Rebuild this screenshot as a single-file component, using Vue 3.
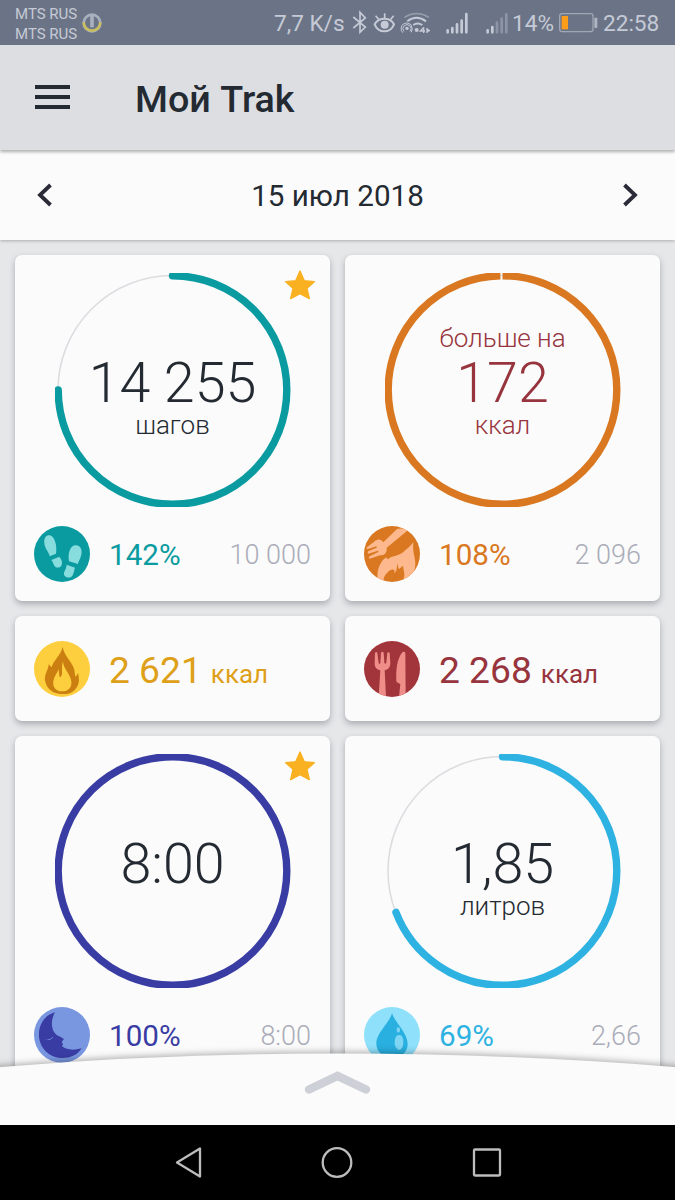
<template>
  <div class="phone">
    <div class="status">
      <div class="operators">
        <span>MTS RUS</span>
        <span>MTS RUS</span>
      </div>
      <svg class="badge" width="20" height="20" viewBox="0 0 60 60">
        <circle cx="30" cy="30" r="25" fill="none" stroke="#a9b0bf" stroke-width="8" />
        <path d="M5 28 A25 25 0 0 0 55 28" fill="none" stroke="#c9bd62" stroke-width="8" />
        <path d="M30 8 V43" stroke="#a9b0bf" stroke-width="11" />
      </svg>
      <span class="speed">7,7 K/s</span>
      <svg class="indicators" width="162" height="30" viewBox="0 0 486 90" fill="none" stroke="#c5cad6">
        <path d="M10 27 L46 57 L30 73 V13 L46 30 L10 60" stroke-width="5" />
        <path d="M74 49 C87 27 119 27 132 49 C121 77 85 77 74 49 Z" stroke-width="6" />
        <circle cx="104" cy="50" r="12" fill="#c5cad6" stroke="none" />
        <path d="M104 31 V16 M87 35 L77 23 M121 35 L131 23" stroke-width="5" />
        <path d="M163 28 Q200 5 237 28" stroke="#959dac" stroke-width="5" />
        <path d="M172 40 Q199 19 228 40" stroke-width="6" />
        <path d="M190 51 Q202 42 217 51" stroke-width="6" />
        <circle cx="171" cy="61" r="5" fill="#c5cad6" stroke="none" />
        <path d="M162 70 A12 12 0 1 1 180 70 M158 74 A18 18 0 0 1 160 48 Q171 40 183 50 Q190 62 184 73" stroke-width="3" />
        <circle cx="200" cy="66" r="6" fill="#c5cad6" stroke="none" />
        <path d="M221 58 L211 69 H225 M221 58 V75 M231 75 V60 M231 62 L239 70 M231 72 L239 66" stroke-width="4" />
        <path d="M293 73 V67 M307 73 V60 M321 73 V49 M335 73 V38 M349 73 V18" stroke-width="8" stroke-linecap="round" />
        <path d="M413 73 V67 M427 73 V57" stroke-width="8" stroke-linecap="round" />
        <path d="M441 73 V44 M455 73 V32 M469 73 V19" stroke="#8d94a5" stroke-width="8" stroke-linecap="round" />
      </svg>
      <span class="charge">14%</span>
      <svg class="battery" width="39" height="20" viewBox="0 0 117 60">
        <rect x="2" y="2" width="100" height="54" rx="7" fill="none" stroke="#9fa6b4" stroke-width="4" />
        <rect x="8" y="9" width="19" height="40" fill="#ff9c18" />
        <rect x="106" y="14" width="9" height="31" rx="2" fill="#aeb4c1" />
      </svg>
      <span class="clock">22:58</span>
    </div>

    <header class="header">
      <div class="burger"><i></i><i></i><i></i></div>
      <h1>Мой Trak</h1>
    </header>

    <div class="datebar">
      <svg width="16" height="24" viewBox="0 0 16 24"><path d="M13.5 2 L3 12 L13.5 22" fill="none" stroke="#2b2b38" stroke-width="3.8" /></svg>
      <span>15 июл 2018</span>
      <svg width="16" height="24" viewBox="0 0 16 24"><path d="M2.5 2 L13 12 L2.5 22" fill="none" stroke="#2b2b38" stroke-width="3.8" /></svg>
    </div>

    <main class="grid">
      <section v-for="card in cards" :key="card.icon" class="card" :class="[card.type, card.icon]">
        <template v-if="card.type === 'goal'">
          <div class="ring">
            <svg width="236" height="234" viewBox="0 0 236 234">
              <circle cx="117.500" cy="117" r="114.5" fill="none" stroke="#dcdde0" stroke-width="1.6" />
              <circle
                cx="117.500" cy="117" r="114.3" fill="none" pathLength="100"
                stroke="currentColor" stroke-width="7.4" :stroke-linecap="card.progress < 99 ? 'round' : 'butt'"
                :stroke-dasharray="card.progress + ' 100'" transform="rotate(-90 117.500 117)"
              />
            </svg>
            <div class="numbers">
              <div class="above">{{ card.above }}</div>
              <div class="value">{{ card.value }}</div>
              <div class="unit">{{ card.unit }}</div>
            </div>
          </div>
          <svg v-if="card.star" class="star" width="32" height="30" viewBox="0 0 96 90">
            <path d="M48 3 L61 32 L91 35 L69 55 L76 86 L48 71 L20 86 L27 55 L5 35 L35 32 Z" fill="#f9b122" stroke="#f9b122" stroke-width="4" stroke-linejoin="round" />
          </svg>
        </template>
        <div class="row">
          <svg class="icon" width="56" height="56" viewBox="0 0 168 168">
            <clipPath :id="'clip-' + card.icon"><circle cx="84" cy="84" r="84" /></clipPath>
            <g :clip-path="`url(#clip-${card.icon})`">
              <rect width="168" height="168" :fill="card.bg" />
              <path v-for="(p, i) in card.paths" :key="i" :d="p[1]" :fill="p[0]" />
            </g>
          </svg>
          <template v-if="card.type === 'goal'">
            <span class="percent">{{ card.percent }}</span>
            <span class="target">{{ card.target }}</span>
          </template>
          <template v-else>
            <span class="amount">{{ card.value }}</span>
            <span class="kcal">{{ card.unit }}</span>
          </template>
        </div>
      </section>
    </main>

    <svg class="drawer" width="675" height="85" viewBox="0 0 675 85">
      <path d="M-5 27.500 Q337.5 -0.500 680 27.500 V95 H-5 Z" fill="#fbfbfb" />
      <path d="M309 49.500 L337.5 36 L366 49.500" fill="none" stroke="#cdd0d7" stroke-width="8.500" stroke-linecap="round" />
    </svg>

    <nav class="navbar">
      <svg width="30" height="34" viewBox="0 0 30 34"><path d="M3 16.500 L26 2.500 V30.500 Z" /></svg>
      <svg width="34" height="34" viewBox="0 0 34 34"><circle cx="17" cy="16.500" r="14.3" /></svg>
      <svg width="34" height="34" viewBox="0 0 34 34"><rect x="4" y="3.500" width="26" height="26" rx="1" /></svg>
    </nav>
  </div>
</template>

<script setup>
const cards = [
  {
    type: 'goal',
    icon: 'steps',
    value: '14 255',
    unit: 'шагов',
    progress: 75,
    percent: '142%',
    target: '10 000',
    star: true,
    bg: '#0a9ba1',
    paths: [
      ['#87dcdd', 'M31 51 C29 33 39 26 48 28 C62 32 70 59 66 83 L47 91 C44 76 32 68 31 51 Z'],
      ['#87dcdd', 'M52 102 L76 92 C82 99 87 110 82 119 C77 127 65 126 62 120 C58 115 57 108 52 102 Z'],
      ['#87dcdd', 'M105 106 C101 85 107 61 122 58 C137 55 146 69 142 86 C139 99 134 103 132 114 Z'],
      ['#87dcdd', 'M98 116 L123 125 C119 133 120 150 109 154 C97 157 86 148 91 137 C95 130 97 124 98 116 Z']
    ]
  },
  {
    type: 'goal',
    icon: 'balance',
    above: 'больше на',
    value: '172',
    unit: 'ккал',
    progress: 99.7,
    percent: '108%',
    target: '2 096',
    bg: '#d97820',
    paths: [
      ['#fdb98d', 'M100 8 L140 6 L68 65 C70 80 62 88 48 88 L17 98 Q12 96 17 91 L43 78 Q45 73 39 75 L13 83 Q8 79 14 75 L38 65 Q39 59 33 62 L9 70 Q5 66 11 62 L33 45 C43 38 51 39 58 49 Z'],
      ['#fdb98d', 'M42 168 C39 147 39 130 51 111 C55 103 61 97 68 94 Q67 101 73 98 C89 87 102 91 119 77 C130 68 140 60 148 49 C145 75 153 92 154 111 C154 133 146 145 145 168 H115 C126 148 119 137 117 119 L105 129 C101 125 104 118 99 113 Q101 129 91 135 C89 128 79 129 69 141 C59 152 58 160 59 168 Z'],
      ['#fdb98d', 'M91 137 L99 127 Q98 137 91 142 Z']
    ]
  },
  {
    type: 'total',
    icon: 'burned',
    value: '2 621',
    unit: 'ккал',
    bg: '#fdce3e',
    paths: [
      ['#cb7f11', 'M86 17 C90 45 113 59 121 86 L124 107 Q130 104 132 95 C137 115 136 133 122 147 C111 158 98 160 84 159 C57 159 37 144 33 118 C31 98 43 88 44 70 L53 79 C57 59 81 43 86 17 Z'],
      ['#fdce3e', 'M87 61 C88 83 105 94 111 116 C117 138 102 152 85 151 C67 152 55 139 58 120 C60 106 70 96 74 84 L76 106 Q82 112 84 98 C84 84 83 73 87 61 Z']
    ]
  },
  {
    type: 'total',
    icon: 'eaten',
    value: '2 268',
    unit: 'ккал',
    bg: '#a2353b',
    paths: [
      ['#ef8e89', 'M33 36 Q37 30 40 36 L44 67 Q48 71 49 65 L51 35 Q55 29 59 35 L61 65 Q63 71 67 65 L70 36 Q73 31 77 36 L79 66 C79 78 74 85 62 88 L66 168 H44 L49 88 C37 85 32 79 32 66 Z'],
      ['#ef8e89', 'M115 34 Q122 30 124 36 L125 168 H105 L109 130 C105 124 98 127 97 119 C96 88 98 55 115 34 Z']
    ]
  },
  {
    type: 'goal',
    icon: 'sleep',
    value: '8:00',
    progress: 100,
    percent: '100%',
    target: '8:00',
    star: true,
    bg: '#7997e0',
    paths: [
      ['#393da3', 'M63 16 C44 51 56 83 79 89 L90 96 L83 105 L87 112 L84 118 C99 130 120 130 143 124 C130 145 107 155 78 153 C43 150 19 124 15 91 C12 53 32 24 63 16 Z'],
      ['#7997e0', 'M34 95 L39 98 Q50 98 58 88 Q55 98 45 99 Q37 100 34 95 Z']
    ]
  },
  {
    type: 'goal',
    icon: 'water',
    value: '1,85',
    unit: 'литров',
    progress: 69.1,
    percent: '69%',
    target: '2,66',
    bg: '#8fe0fb',
    paths: [
      ['#29b0e0', 'M84 19 C93 47 131 77 131 111 C131 137 111 151 84 151 C58 151 36 137 37 106 C38 79 77 45 84 19 Z'],
      ['#7fd5f4', 'M102 60 C110 62 110 76 103 77 C96 75 97 63 102 60 Z'],
      ['#7fd5f4', 'M105 84 C114 83 119 94 118 106 C118 119 113 127 107 129 C99 129 93 120 92 109 C92 94 96 84 105 84 Z']
    ]
  }
]
</script>

<style>
body {
  margin: 0;
}
</style>

<style scoped>
.phone {
  position: relative;
  width: 675px;
  height: 1200px;
  overflow: hidden;
  display: flex;
  flex-direction: column;
  background: #e6e7e9;
  color: #242a32;
  font-family: Roboto, sans-serif;
}

svg {
  display: block;
  flex-shrink: 0;
}

.status {
  height: 45px;
  flex-shrink: 0;
  box-sizing: border-box;
  padding-left: 15px;
  display: flex;
  align-items: center;
  background: #6b7486;
  color: #c5cad6;
  font-size: 22.6px;
  line-height: 30px;
  white-space: nowrap;
}

.operators {
  width: 67px;
  display: flex;
  flex-direction: column;
  font-size: 15px;
  line-height: 20px;
  margin-top: 2px;
}

.speed {
  margin-left: 172px;
  width: 76px;
  margin-top: 2px;
}

.charge {
  width: 47px;
  margin-top: 2px;
}

.clock {
  margin-left: 5px;
  margin-top: 2px;
}

.header {
  position: relative;
  z-index: 1;
  height: 105px;
  flex-shrink: 0;
  display: flex;
  align-items: center;
  padding-left: 35px;
  background: #dddee2;
  box-shadow: 0 2px 3px rgba(0, 0, 0, 0.3);
}

.burger {
  width: 35px;
  height: 24px;
  margin-top: -1px;
  display: flex;
  flex-direction: column;
  justify-content: space-between;
}

.burger i {
  height: 4px;
  background: #242a32;
}

h1 {
  margin: 3px 0 0 65px;
  font-size: 37.7px;
  font-weight: 500;
}

.datebar {
  position: relative;
  height: 90px;
  flex-shrink: 0;
  box-sizing: border-box;
  padding: 0 37px;
  display: flex;
  align-items: center;
  justify-content: space-between;
  background: #fbfbfb;
  box-shadow: 0 1px 3px rgba(0, 0, 0, 0.25);
  font-size: 29.6px;
}

.datebar span {
  padding-top: 2px;
}

.grid {
  height: 885px;
  flex-shrink: 0;
  box-sizing: border-box;
  padding: 15px 15px 0;
  overflow: hidden;
  display: grid;
  grid-template-columns: 315px 315px;
  grid-template-rows: 346px 105px 346px;
  gap: 15px;
}

.card {
  position: relative;
  border-radius: 7px;
  background: #fbfbfb;
  box-shadow: 0 3px 6px rgba(40, 45, 55, 0.32);
}

.ring {
  display: grid;
  width: 236px;
  margin: 0 auto;
  padding-top: 18px;
}

.ring > * {
  grid-area: 1 / 1;
}

.numbers {
  padding-top: 51px;
  text-align: center;
  color: #242a32;
  font-weight: 300;
}

.above,
.unit {
  height: 28px;
  line-height: 28px;
  font-size: 26px;
}

.above {
  margin-bottom: 3px;
}

.value {
  font-size: 55.6px;
  line-height: 56px;
}

.balance .numbers {
  color: #97343d;
}

.star {
  position: absolute;
  top: 15px;
  right: 14px;
}

.row {
  display: flex;
  align-items: center;
  padding: 0 19px;
}

.goal .row {
  padding-top: 19px;
}

.total .row {
  height: 105px;
  align-items: baseline;
}

.total .icon {
  align-self: center;
}

.percent {
  margin: 2px 0 0 19px;
  font-size: 29.6px;
}

.target {
  margin: 2px 0 0 auto;
  font-size: 27px;
  font-weight: 300;
  color: #aaacb8;
}

.amount {
  margin-left: 19px;
  font-size: 37.2px;
  line-height: 109px;
}

.kcal {
  margin-left: 9px;
  font-size: 26px;
}

.steps {
  color: #0a9ba1;
}

.balance {
  color: #d97820;
}

.burned {
  color: #dfa019;
}

.eaten {
  color: #97343d;
}

.sleep {
  color: #393da3;
}

.water {
  color: #2eb2e2;
}

.drawer {
  position: absolute;
  left: 0;
  top: 1040px;
  overflow: visible;
  filter: drop-shadow(0 -2px 3px rgba(0, 0, 0, 0.28));
}

.navbar {
  position: relative;
  height: 75px;
  flex-shrink: 0;
  display: flex;
  align-items: center;
  justify-content: center;
  gap: 116px;
  padding-left: 3px;
  box-sizing: border-box;
  background: #000;
}

.navbar svg {
  fill: none;
  stroke: #bdbdbd;
  stroke-width: 2.3;
  stroke-linejoin: round;
}
</style>
